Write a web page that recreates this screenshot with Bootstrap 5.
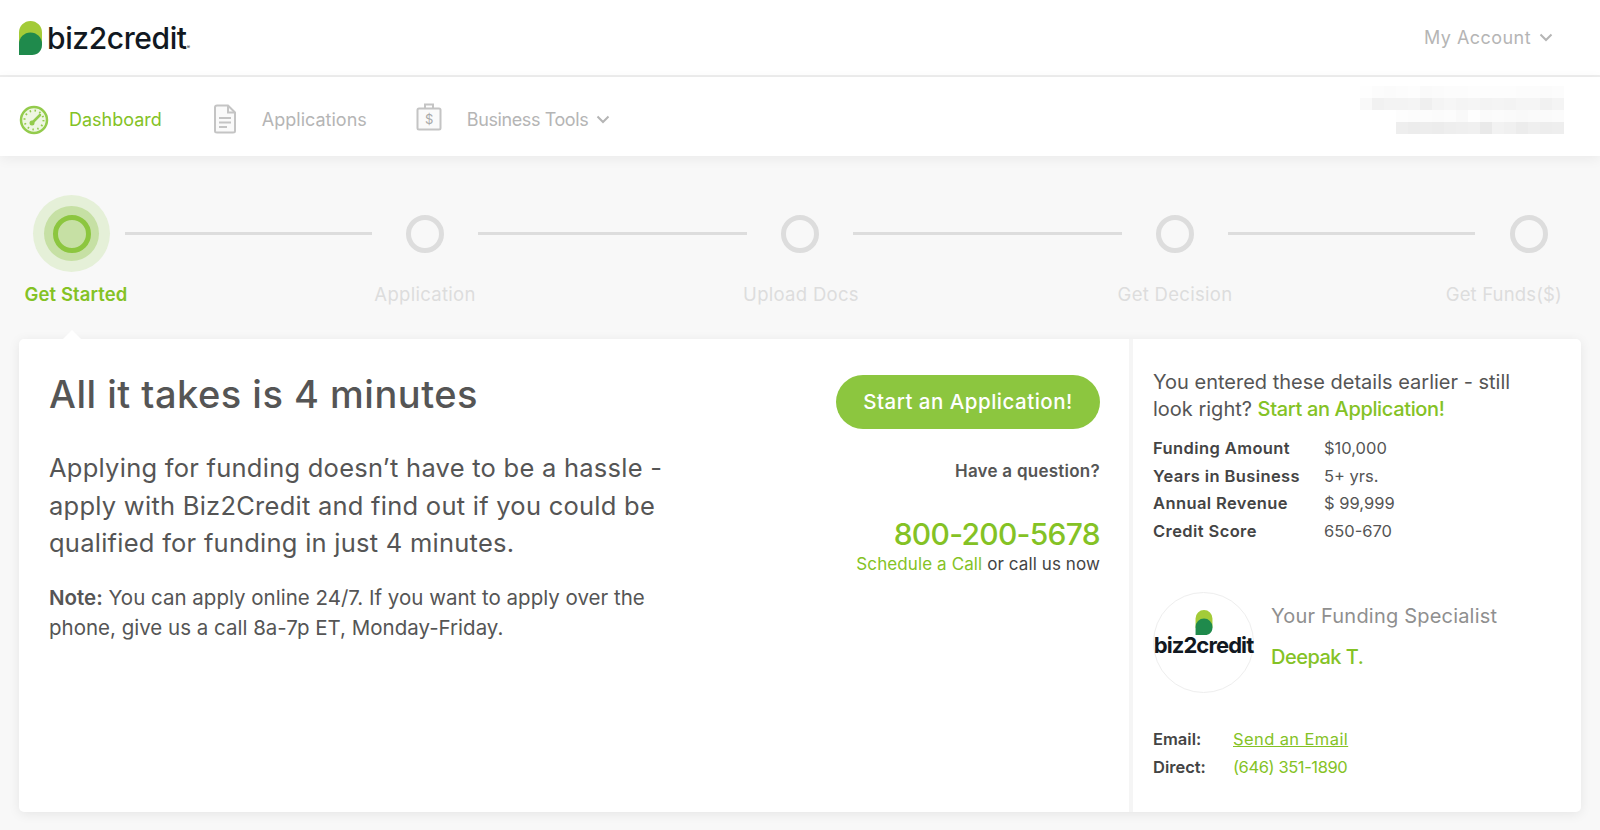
<!DOCTYPE html>
<html lang="en">
<head>
  <meta charset="UTF-8">
  <title>Biz2Credit Dashboard</title>
  <link href="https://cdn.jsdelivr.net/npm/bootstrap@5.3.2/dist/css/bootstrap.min.css" rel="stylesheet">
  <style>
    body { background: #f8f8f8; font-family: Inter, "Open Sans", sans-serif; color: #555; height: 830px; overflow: hidden; }
    a { text-decoration: none; }
    .b2c-head { height: 77px; padding: 0 47px 0 19px; background: #fff; border-bottom: 2px solid #eee; }
    .logo-text { font-size: 30px; font-weight: 500; color: #111821; letter-spacing: -.4px; margin-left: 5px; line-height: 1; }
    .logo-mark { font-size: 5px; vertical-align: baseline; }
    .account-link { font-size: 18px; color: #b5b5b5; letter-spacing: .45px; }
    .subnav { height: 79px; padding: 0 36px 0 19px; background: #fff; box-shadow: 0 3px 12px rgba(0,0,0,.06); }
    .subnav-links { padding-top: 6px; }
    .subnav-link { font-size: 18px; color: #b5b5b5; }
    .subnav-link.is-active { color: #84c225; }
    .subnav-gap { margin-left: 51px; }
    .subnav-gap-tools { margin-left: 49px; letter-spacing: -.4px; }
    .icon-gap { margin-right: 21px; }
    .blur-box { width: 204px; margin-top: -14px; }
    .blur-row { display: flex; justify-content: flex-end; }
    .blur-cell { width: 12px; height: 12px; }
    .step-track { padding: 39px 52px 0 33px; height: 116px; }
    .halo { width: 77px; height: 77px; border-radius: 50%; background: #e5f0d8; }
    .halo-mid { width: 55px; height: 55px; border-radius: 50%; background: #c6e0a4; }
    .halo-ring { width: 38px; height: 38px; border-radius: 50%; border: 5px solid #8cc63f; }
    .step-dot { width: 38px; height: 38px; margin-top: 20px; border-radius: 50%; border: 5px solid #ddd; }
    .step-line { height: 3px; background: #ddd; margin-top: 37px; }
    .line-a { width: 247px; margin-left: 15px; margin-right: 34px; }
    .line-b { width: 269px; margin-left: 34px; margin-right: 34px; }
    .line-c { width: 247px; margin-left: 34px; margin-right: 35px; }
    .step-labels { display: grid; grid-template-columns: 152px 546px 206px 542px 116px; margin-top: 9px; height: 58px; font-size: 18.5px; line-height: 27px; color: #ddd; letter-spacing: .3px; }
    .step-labels > div { text-align: center; white-space: nowrap; }
    .step-labels > div:last-child { justify-self: end; text-align: right; letter-spacing: .15px; }
    .step-labels > .step-on { color: #84c225; font-weight: 600; letter-spacing: .1px; }
    .main-panel { position: relative; margin: 0 19px; height: 473px; background: #fff; border-radius: 5px; box-shadow: 0 2px 12px rgba(0,0,0,.08); }
    .main-panel::before { content: ""; position: absolute; left: 43px; top: -9px; border: 10px solid transparent; border-top: 0; border-bottom-color: #fff; }
    .left-pane { width: 1114px; padding: 30px 29px 0 30px; border-right: 4px solid #f5f5f5; }
    .copy-col { width: 620px; }
    .title-text { font-size: 38px; font-weight: 500; color: #555; line-height: 50px; margin: 0 0 30px; letter-spacing: .5px; }
    .lead-text { font-size: 25.5px; line-height: 37.7px; color: #555; margin-bottom: 21px; letter-spacing: .25px; }
    .note-text { font-size: 20.5px; line-height: 30px; color: #555; margin: 0; }
    .cta-col { width: 264px; }
    .btn-cta { width: 264px; height: 54px; margin-top: 6px; border-radius: 27px; border: 0; background: #8cc63f; color: #fff; font-size: 20.5px; font-weight: 500; letter-spacing: .5px; }
    .btn-cta:hover { background: #8cc63f; color: #fff; }
    .question { font-size: 17px; font-weight: 600; color: #555; margin-top: 30px; line-height: 24px; letter-spacing: .25px; }
    .phone { font-size: 30px; font-weight: 500; color: #84c225; margin-top: 31px; line-height: 40px; letter-spacing: -.7px; }
    .call-now { font-size: 17px; color: #444; line-height: 24px; margin-top: -2px; letter-spacing: .1px; }
    .call-now a { color: #84c225; }
    .side-pane { padding: 30px 20px 0 20px; flex: 1; }
    .side-intro { font-size: 20px; line-height: 27px; color: #555; margin-bottom: 12px; max-width: 380px; }
    .side-intro a { color: #84c225; font-weight: 500; letter-spacing: -.35px; }
    .fact-row { display: flex; font-size: 16.500px; line-height: 27.700px; color: #555; }
    .fact-row b { width: 171px; font-weight: 600; color: #444; letter-spacing: .4px; }
    .avatar { width: 101px; height: 101px; padding-bottom: 20px; border-radius: 50%; border: 1px solid #eee; }
    .avatar-text { font-size: 22px; font-weight: 700; color: #111821; line-height: 18px; letter-spacing: -.9px; }
    .spec-label { font-size: 20px; color: #8f8f8f; line-height: 28px; letter-spacing: .2px; }
    .spec-name { font-size: 20px; font-weight: 500; color: #84c225; margin-top: 13px; line-height: 28px; letter-spacing: -.5px; }
    .contact-row { display: flex; font-size: 16.500px; line-height: 28px; }
    .contact-row b { width: 80px; font-weight: 600; color: #444; }
    .contact-row a, .contact-row span { color: #84c225; }
    .contact-row a { text-decoration: underline; letter-spacing: .4px; }
    .contact-row span { letter-spacing: -.4px; }
  </style>
</head>
<body>

<header class="b2c-head d-flex align-items-center justify-content-between">
  <a href="#" class="d-flex align-items-center">
    <svg width="23" height="34" viewBox="0 0 23 34">
      <path d="M0 34V11.500a11.500 11.500 0 0 1 23 0V24H0z" fill="#a3cb38"/>
      <path d="M0 34V23a11.500 11.500 0 0 1 23 0v1c0 6-4.500 10-10 10z" fill="#1f8a4c"/>
    </svg>
    <span class="logo-text">biz2credit<span class="logo-mark">®</span></span>
  </a>
  <a href="#" class="account-link d-flex align-items-center gap-2">My Account
    <svg width="14" height="9" viewBox="0 0 14 9"><path d="M1.500 1.500 7 7l5.500-5.500" fill="none" stroke="#b5b5b5" stroke-width="2"/></svg>
  </a>
</header>

<nav class="subnav d-flex align-items-center justify-content-between">
  <div class="subnav-links d-flex align-items-center">
    <a href="#" class="d-flex align-items-center subnav-link is-active">
      <svg width="30" height="30" viewBox="0 0 30 30" class="me-3">
        <circle cx="15" cy="15" r="13" fill="#eef6e2" stroke="#93cb4c" stroke-width="2.500"/>
        <circle cx="15" cy="15" r="9.500" fill="none" stroke="#93cb4c" stroke-width="2" stroke-dasharray="1.500 3.500"/>
        <path d="M13 18 21 10" stroke="#93cb4c" stroke-width="2.500" stroke-linecap="round"/>
        <circle cx="13" cy="18" r="2.500" fill="#93cb4c"/>
      </svg>
      <span class="ms-1">Dashboard</span>
    </a>
    <a href="#" class="d-flex align-items-center subnav-link subnav-gap">
      <svg width="24" height="30" viewBox="0 0 24 30" class="icon-gap" style="margin-top:-2px">
        <path d="M2 3.500C2 2.500 3 1.500 4 1.500h11l7 7V27c0 1-1 1.500-2 1.500H4c-1 0-2-.5-2-1.500z" fill="#fafafa" stroke="#c4c4c4" stroke-width="2"/>
        <path d="M15 1.500V8.500h7M6 14h12M6 18.500h12M6 23h8" fill="none" stroke="#c4c4c4" stroke-width="2"/>
      </svg>
      <span class="ms-1">Applications</span>
    </a>
    <a href="#" class="d-flex align-items-center subnav-link subnav-gap-tools">
      <svg width="26" height="28" viewBox="0 0 26 28" class="icon-gap" style="margin-top:-5px">
        <rect x="1.500" y="5.500" width="23" height="21" rx="1.500" fill="#fafafa" stroke="#c4c4c4" stroke-width="2"/>
        <path d="M9 5.500V1.500h8V5.500" fill="none" stroke="#c4c4c4" stroke-width="2"/>
        <text x="13" y="21" text-anchor="middle" font-size="13" fill="#a8a8a8" font-family="Inter, sans-serif">$</text>
      </svg>
      <span class="ms-1">Business Tools</span>
      <svg width="14" height="9" viewBox="0 0 14 9" class="ms-2"><path d="M1.500 1.500 7 7l5.500-5.500" fill="none" stroke="#b5b5b5" stroke-width="2"/></svg>
    </a>
  </div>
  <div class="blur-box" id="blurBox"></div>
</nav>

<section>
  <div class="step-track d-flex align-items-start">
    <div class="halo d-flex align-items-center justify-content-center flex-shrink-0">
      <div class="halo-mid d-flex align-items-center justify-content-center">
        <div class="halo-ring"></div>
      </div>
    </div>
    <div class="step-line line-a"></div>
    <div class="step-dot flex-shrink-0"></div>
    <div class="step-line line-b"></div>
    <div class="step-dot flex-shrink-0"></div>
    <div class="step-line line-b"></div>
    <div class="step-dot flex-shrink-0"></div>
    <div class="step-line line-c"></div>
    <div class="step-dot flex-shrink-0"></div>
  </div>
  <div class="step-labels">
    <div class="step-on">Get Started</div>
    <div>Application</div>
    <div>Upload Docs</div>
    <div>Get Decision</div>
    <div>Get Funds($)</div>
  </div>
</section>

<main class="main-panel d-flex">
  <div class="left-pane d-flex justify-content-between">
    <div class="copy-col">
      <h1 class="title-text">All it takes is 4 minutes</h1>
      <p class="lead-text">Applying for funding doesn’t have to be a hassle - apply with Biz2Credit and find out if you could be qualified for funding in just 4 minutes.</p>
      <p class="note-text"><b class="fw-semibold">Note:</b> You can apply online 24/7. If you want to apply over the phone, give us a call 8a-7p ET, Monday-Friday.</p>
    </div>
    <div class="cta-col text-end">
      <a href="#" class="btn btn-cta d-flex align-items-center justify-content-center">Start an Application!</a>
      <div class="question">Have a question?</div>
      <div class="phone">800-200-5678</div>
      <div class="call-now"><a href="#">Schedule a Call</a> or call us now</div>
    </div>
  </div>
  <aside class="side-pane">
    <p class="side-intro">You entered these details earlier - still look right? <a href="#">Start an Application!</a></p>
    <div class="fact-row"><b>Funding Amount</b><span>$10,000</span></div>
    <div class="fact-row"><b>Years in Business</b><span>5+ yrs.</span></div>
    <div class="fact-row"><b>Annual Revenue</b><span>$ 99,999</span></div>
    <div class="fact-row"><b>Credit Score</b><span>650-670</span></div>
    <div class="d-flex" style="margin-top:46px">
      <div class="avatar d-flex flex-column align-items-center justify-content-center flex-shrink-0">
        <svg width="18" height="25" viewBox="0 0 23 34">
          <path d="M0 34V11.500a11.500 11.500 0 0 1 23 0V24H0z" fill="#a3cb38"/>
          <path d="M0 34V23a11.500 11.500 0 0 1 23 0v1c0 6-4.500 10-10 10z" fill="#1f8a4c"/>
        </svg>
        <span class="avatar-text" style="margin-top:1px">biz2credit</span>
      </div>
      <div style="margin-left:17px;margin-top:10px">
        <div class="spec-label">Your Funding Specialist</div>
        <div class="spec-name">Deepak T.</div>
      </div>
    </div>
    <div style="margin-top:32px">
      <div class="contact-row"><b>Email:</b><a href="#">Send an Email</a></div>
      <div class="contact-row"><b>Direct:</b><span>(646) 351-1890</span></div>
    </div>
  </aside>
</main>

<script>
  // pixelated block over the account name
  const blurRows = [
    ['fefefe','fcfcfc','fbfbfb','fcfcfc','fdfdfd','fafafa','fbfbfb','fcfcfc','fcfcfc','fdfdfd','fdfdfd','fdfdfd','fdfdfd','fcfcfc','fcfcfc','fbfbfb','fcfcfc'],
    ['f9f9f9','f1f1f1','f3f3f3','f3f3f3','f4f4f4','efefef','f4f4f4','f6f6f6','f4f4f4','f5f5f5','f3f3f3','f4f4f4','f3f3f3','f5f5f5','f5f5f5','f1f1f1','f4f4f4'],
    ['fdfdfd','fcfcfc','fcfcfc','fbfbfb','fcfcfc','f9f9f9','fefefe','fafafa','fbfbfb','fafafa','f9f9f9','fafafa','fafafa','fbfbfb'],
    ['eeeeee','ececec','ededed','ececec','eeeeee','efefef','f0f0f0','e9e9e9','f2f2f2','f0f0f0','ececec','efefef','ededed','eeeeee']
  ];
  document.getElementById('blurBox').innerHTML = blurRows.map(row =>
    '<div class="blur-row">' + row.map(c => `<span class="blur-cell" style="background:#${c}"></span>`).join('') + '</div>'
  ).join('');
</script>

</body>
</html>
